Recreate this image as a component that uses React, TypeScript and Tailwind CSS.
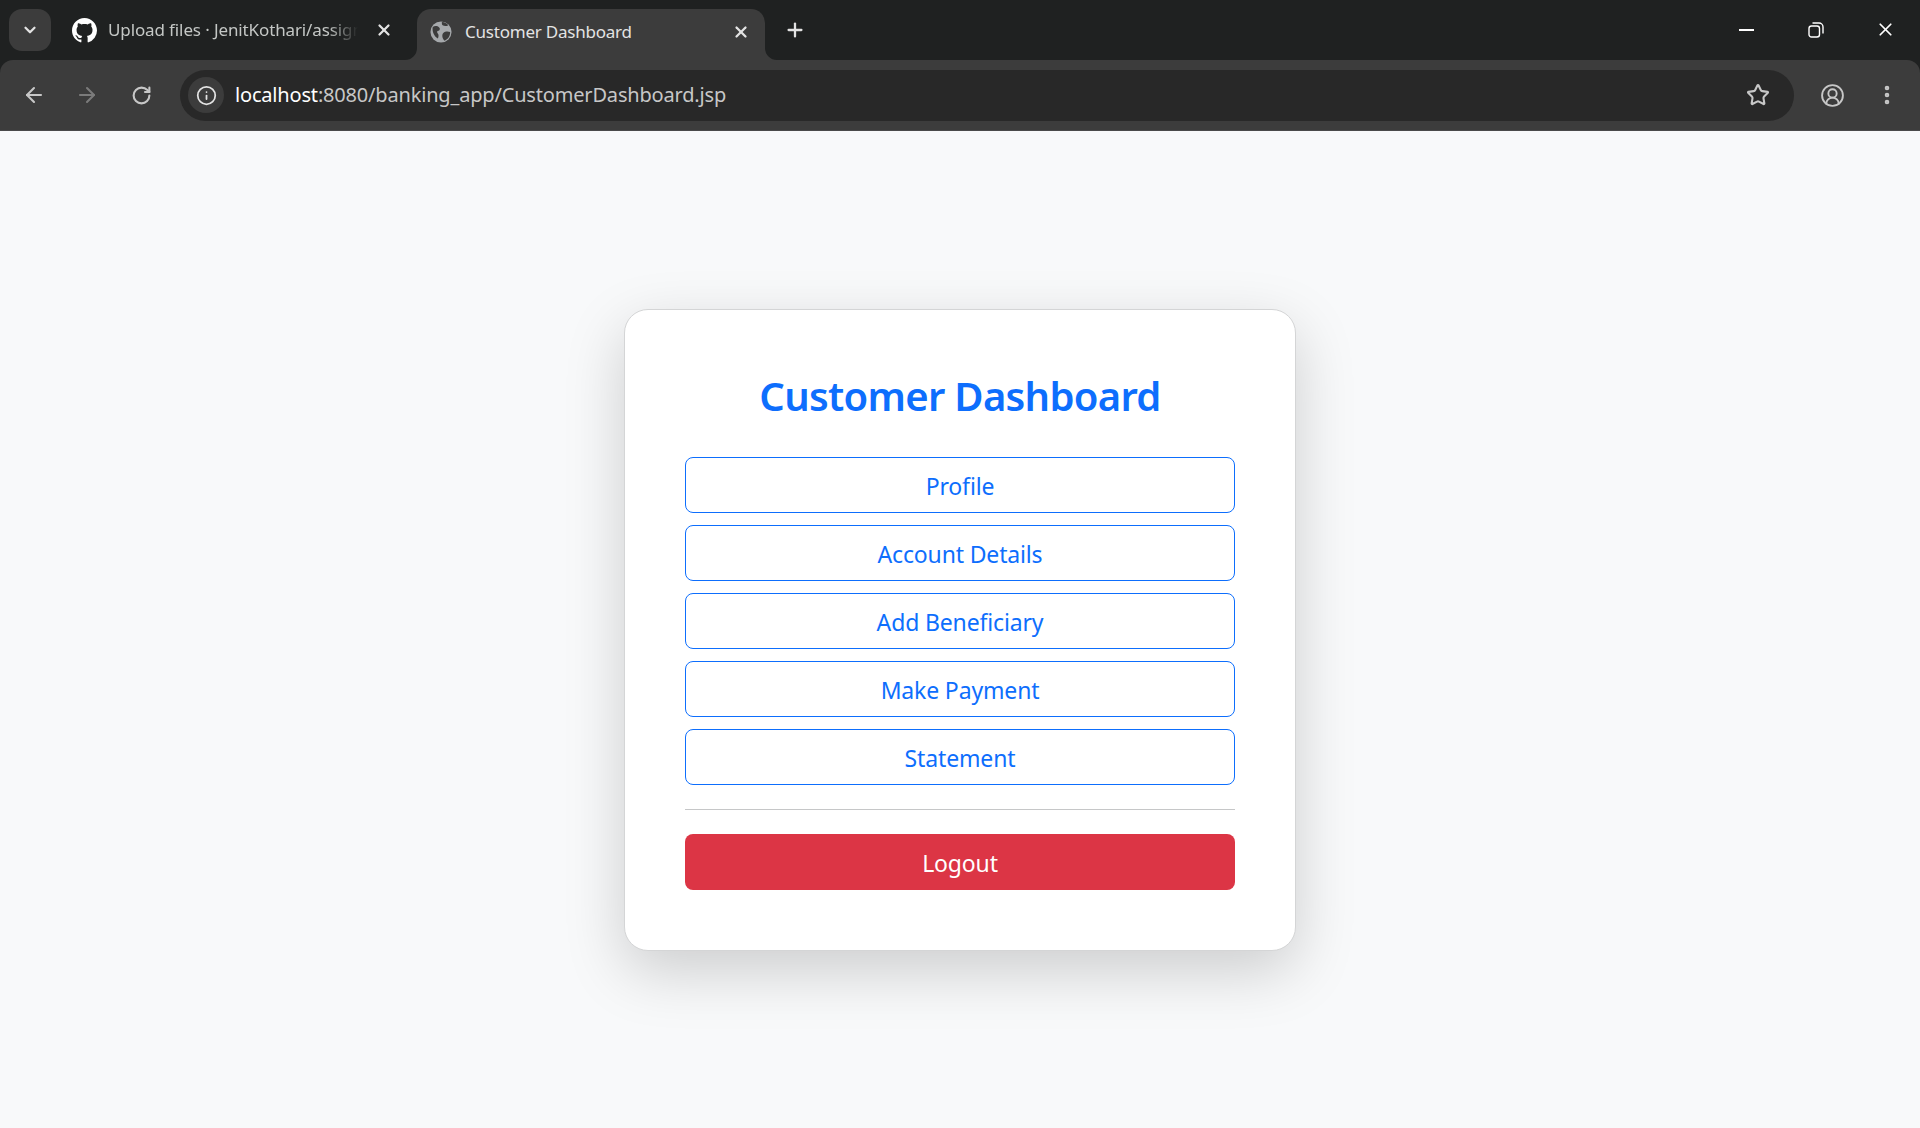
import { ArrowLeft, ArrowRight, ChevronDown, Info, Plus, RotateCw, Star, CircleUserRound, X, EllipsisVertical } from "lucide-react";

const links = ["Profile", "Account Details", "Add Beneficiary", "Make Payment", "Statement"];

function GithubMark() {
  return (
    <svg viewBox="0 0 16 16" className="w-[25px] h-[25px]" fill="#ffffff">
      <path d="M8 0C3.58 0 0 3.58 0 8c0 3.54 2.29 6.53 5.47 7.59.4.07.55-.17.55-.38 0-.19-.01-.82-.01-1.49-2.01.37-2.53-.49-2.69-.94-.09-.23-.48-.94-.82-1.13-.28-.15-.68-.52-.01-.53.63-.01 1.08.58 1.23.82.72 1.21 1.87.87 2.33.66.07-.52.28-.87.51-1.07-1.78-.2-3.64-.89-3.64-3.95 0-.87.31-1.59.82-2.15-.08-.2-.36-1.02.08-2.12 0 0 .67-.21 2.2.82.64-.18 1.32-.27 2-.27s1.36.09 2 .27c1.53-1.04 2.2-.82 2.2-.82.44 1.1.16 1.92.08 2.12.51.56.82 1.27.82 2.15 0 3.07-1.87 3.75-3.65 3.95.29.25.54.73.54 1.48 0 1.07-.01 1.93-.01 2.2 0 .21.15.46.55.38A8.01 8.01 0 0 0 16 8c0-4.42-3.58-8-8-8z" />
    </svg>
  );
}

function GlobeIcon() {
  return (
    <svg viewBox="0 0 24 24" className="w-[22px] h-[22px]">
      <circle cx="12" cy="12" r="11.500" fill="#a6a9ac" />
      <path d="M3 6.500C5 5 8 5 10 7c1.500 1.500.5 3.500-1 3.500-1.500 0-1.500 2-.5 3 1.200 1.500 1 3.500 0 5.500C4.500 17 2 11 3 6.500zM14.500 13c2-1.800 5-2 7.500-1 0 4.500-2.500 8-6 9.500-2.500-2-3.500-6.500-1.500-8.500zM13 1c3 .2 5.500 1.500 7 3.500-2 1.500-4.500 1.300-6.200.2C13 4 12.800 2.500 13 1z" fill="#3c3c3c" />
    </svg>
  );
}

function RestoreIcon() {
  return (
    <svg viewBox="0 0 16 16" className="w-[16px] h-[16px]" fill="none" stroke="#ffffff" strokeWidth="1.4">
      <rect x="1" y="4" width="10.500" height="11" rx="2.500" />
      <path d="M4.500 1h6.500a4 4 0 0 1 4 4v6.500" />
    </svg>
  );
}

export default function App() {
  return (
    <div className="min-h-[1128px] flex flex-col bg-[#f8f9fa] font-['Noto_Sans','Open_Sans',sans-serif]">
      {/* browser chrome */}
      <div className="bg-[#1f2121] shrink-0">
        <div className="h-[60px] flex items-start pl-[9px]">
          <div className="mt-[9px] w-[42px] h-[42px] rounded-[13px] bg-[#3c3c3c] flex items-center justify-center">
            <ChevronDown className="w-[18px] h-[18px] text-[#e3e3e3]" strokeWidth={3} />
          </div>
          <div className="ml-[21px] w-[345px] h-[60px] flex items-center">
            <GithubMark />
            <span className="ml-[11px] w-[250px] overflow-hidden whitespace-nowrap text-[17px] text-[#c4c7c5] tracking-[-0.12px] [mask-image:linear-gradient(to_right,black_88%,transparent)]">
              Upload files · JenitKothari/assignment
            </span>
            <X className="ml-[17px] w-[18px] h-[18px] text-[#e3e3e3]" strokeWidth={3} />
          </div>
          <div className="relative mt-[9px] w-[348px] h-[51px] bg-[#3c3c3c] rounded-t-[14px] flex items-center pl-[13px] pb-[6px]">
            <svg viewBox="0 0 12 12" className="absolute left-[-12px] bottom-0 w-[12px] h-[12px]">
              <path d="M12 0v12H0a12 12 0 0 0 12-12z" fill="#3c3c3c" />
            </svg>
            <svg viewBox="0 0 12 12" className="absolute right-[-12px] bottom-0 w-[12px] h-[12px]">
              <path d="M0 0v12h12A12 12 0 0 1 0 0z" fill="#3c3c3c" />
            </svg>
            <GlobeIcon />
            <span className="ml-[13px] w-[267px] whitespace-nowrap text-[17px] text-[#e3e3e3] tracking-[-0.22px]">Customer Dashboard</span>
            <X className="w-[18px] h-[18px] text-[#e3e3e3]" strokeWidth={3} />
          </div>
          <div className="ml-[19px] mt-[9px] h-[42px] flex items-center">
            <Plus className="w-[22px] h-[22px] text-[#e3e3e3]" strokeWidth={2.5} />
          </div>
          <div className="ml-auto flex h-[60px] items-center pr-[24px] pb-[1px]">
            <div className="w-[15px] h-[2px] bg-white" />
            <div className="ml-[54px]">
              <RestoreIcon />
            </div>
            <X className="ml-[51px] w-[21px] h-[21px] text-white" strokeWidth={2} />
          </div>
        </div>

        {/* toolbar */}
        <div className="h-[71px] bg-[#3c3c3c] rounded-t-[13px] border-b border-[#4a4a4a] flex items-center pl-[22px] pr-[8px]">
          <ArrowLeft className="w-[24px] h-[24px] text-[#c7c7c7]" strokeWidth={2.1} />
          <ArrowRight className="ml-[29px] w-[24px] h-[24px] text-[#7b7b7b]" strokeWidth={2.1} />
          <RotateCw className="ml-[32px] w-[21px] h-[21px] text-[#c7c7c7]" strokeWidth={2.4} />
          <div className="ml-[28px] w-[1614px] h-[51px] bg-[#282828] rounded-full flex items-center pl-[8px] pr-[24px]">
            <div className="w-[36px] h-[36px] rounded-full bg-[#3c3c3c] flex items-center justify-center">
              <Info className="w-[21px] h-[21px] text-[#e3e3e3]" strokeWidth={2} />
            </div>
            <div className="ml-[11px] text-[20px] text-[#c7c7c7] tracking-[-0.18px] whitespace-nowrap">
              <span className="text-white">localhost</span>:8080/banking_app/CustomerDashboard.jsp
            </div>
            <Star className="ml-auto w-[24px] h-[24px] text-[#c7c7c7]" strokeWidth={2.1} />
          </div>
          <CircleUserRound className="ml-[26px] w-[25px] h-[25px] text-[#c7c7c7]" strokeWidth={1.8} />
          <EllipsisVertical className="ml-[30px] w-[24px] h-[24px] text-[#c7c7c7]" strokeWidth={2.6} />
        </div>
      </div>

      {/* page */}
      <main className="flex-1 flex items-center justify-center">
        <div className="w-[672px] h-[642px] bg-white border border-[#d4d5d6] rounded-[24px] shadow-[0_20px_60px_rgba(0,0,0,0.175)] px-[60px] pt-[62px]">
          <h1 className="text-center text-[40px] leading-[48px] font-semibold text-[#0d6efd] tracking-[-0.7px]">Customer Dashboard</h1>
          <div className="mt-[37px] flex flex-col gap-[12px]">
            {links.map((label) => (
              <a
                key={label}
                className="h-[56px] border border-[#0d6efd] rounded-[8px] flex items-center justify-center text-[23px] text-[#0d6efd] tracking-[-0.15px] pt-[3px]"
              >
                {label}
              </a>
            ))}
          </div>
          <hr className="mt-[24px] border-t border-[#c6c7c8]" />
          <a className="mt-[24px] h-[56px] bg-[#dc3545] rounded-[8px] flex items-center justify-center text-[23px] text-white tracking-[-0.15px] pt-[3px]">
            Logout
          </a>
        </div>
      </main>
    </div>
  );
}
